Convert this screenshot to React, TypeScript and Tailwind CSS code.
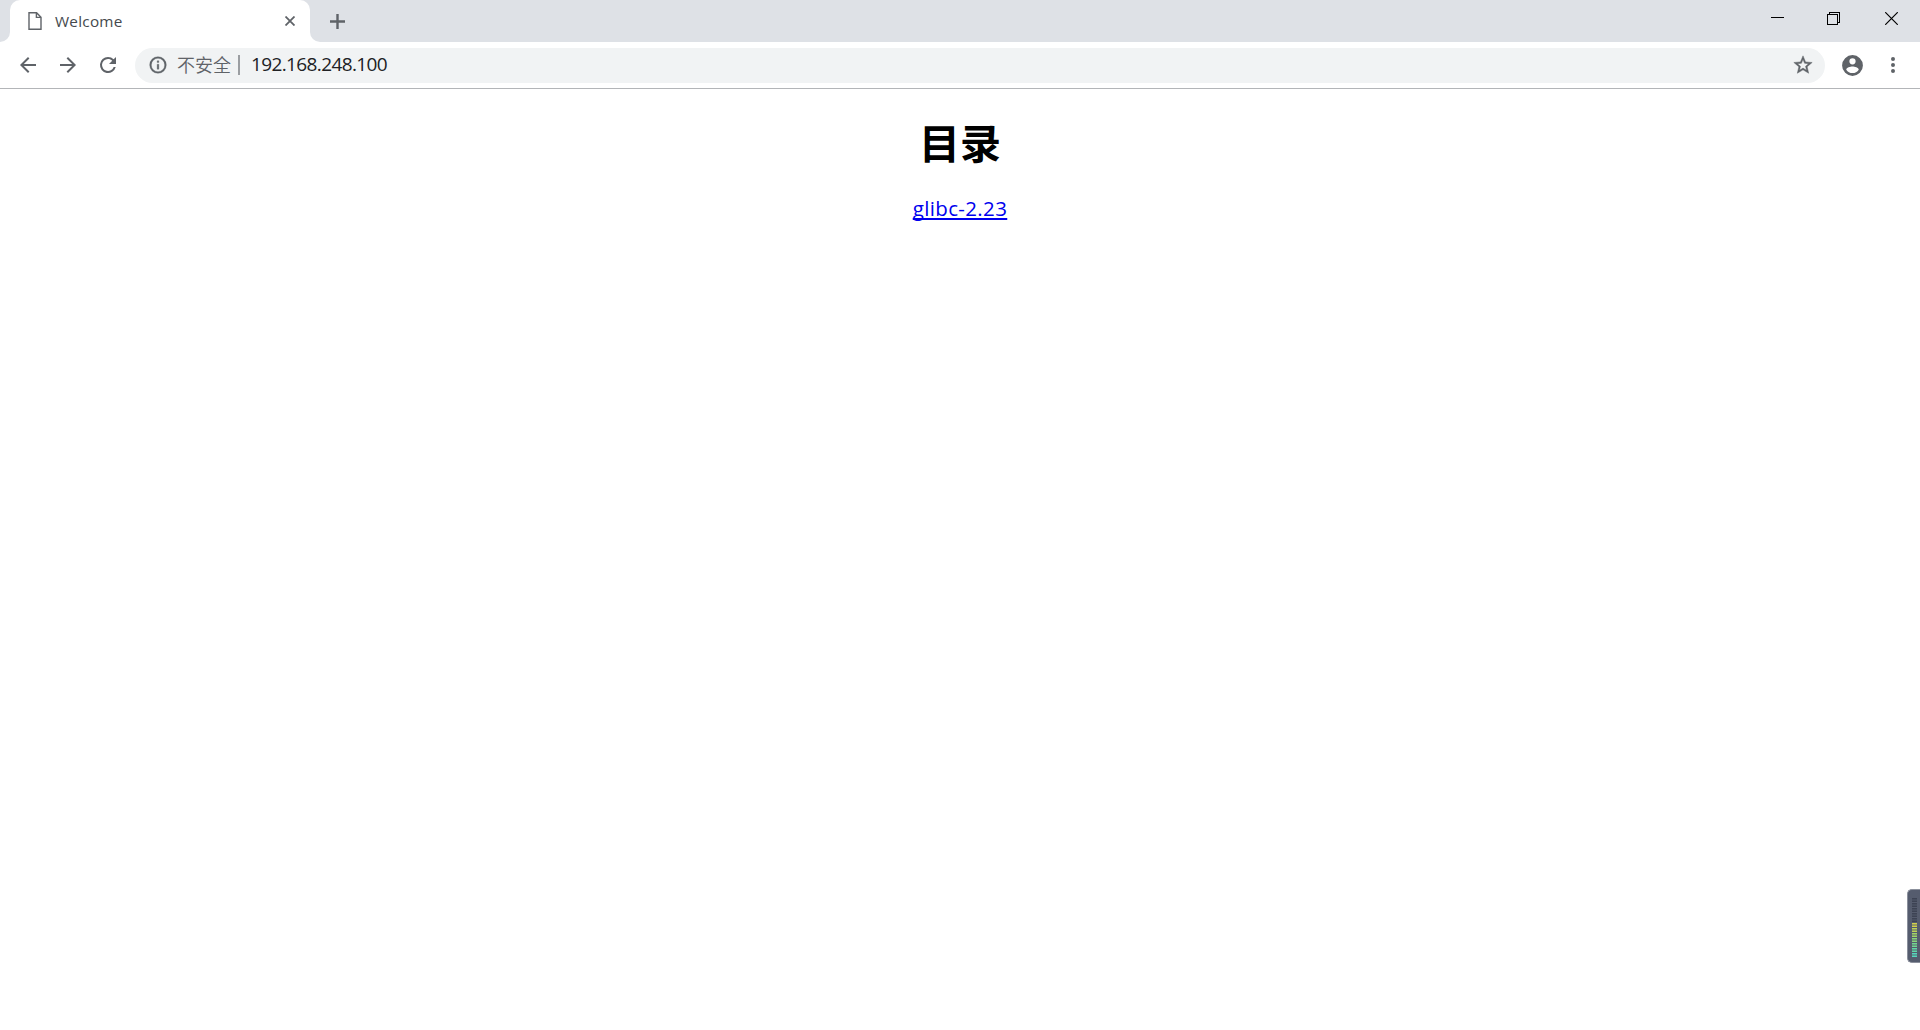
import React from "react";

const meter = [
  "#3d4354", "#3d4354", "#3d4354", "#3d4354", "#3d4354",
  "#d2d24c", "#bdd458", "#a2d766", "#88d77c",
  "#72d890", "#60d8a8", "#56d8bc",
];

function Icon({ d, className }: { d: string; className: string }) {
  return (
    <svg viewBox="0 0 24 24" fill="currentColor" className={`shrink-0 ${className}`}>
      <path d={d} />
    </svg>
  );
}

function TabStrip() {
  return (
    <header className="flex h-[42px] items-start bg-[#dee1e6]">
      <div className="h-[42px] w-[10px] bg-white">
        <div className="h-full rounded-br-[10px] bg-[#dee1e6]" />
      </div>
      <div className="flex h-[42px] w-[300px] items-center rounded-t-[10px] bg-white pl-[18px] text-[#5f6368]">
        <svg viewBox="0 0 14 18" fill="none" stroke="#5f6368" strokeWidth="1.4" className="h-[18px] w-[14px]">
          <path d="M1 .8h7.6L13 5.2v12H1zM8.4 1v4.4h4.4" />
        </svg>
        <span className="ml-[13px] flex-1 text-[15.300px] leading-[20px] tracking-[0.250px] text-[#45494d]">Welcome</span>
        <svg viewBox="0 0 10 10" fill="none" stroke="currentColor" strokeWidth="1.8" className="mr-[15px] h-[10px] w-[10px]">
          <path d="M.5.5l9 9M9.500 .5l-9 9" />
        </svg>
      </div>
      <div className="flex h-[42px] flex-1 bg-white">
        <div className="flex flex-1 rounded-bl-[10px] bg-[#dee1e6]">
          <svg viewBox="0 0 15 15" fill="none" stroke="#5f6368" strokeWidth="2.4" className="ml-5 mt-[13.500px] h-[15px] w-[15px]">
            <path d="M0 7.500h15M7.500 0v15" />
          </svg>
          <div className="ml-auto flex text-black">
            <svg viewBox="0 0 13 13" className="mr-[43px] mt-3 h-[13px] w-[13px]" shapeRendering="crispEdges">
              <path d="M0 5.500h13" stroke="currentColor" />
            </svg>
            <svg viewBox="0 0 13 13" fill="none" stroke="currentColor" className="mr-[45px] mt-3 h-[13px] w-[13px]" shapeRendering="crispEdges">
              <path d="M.5 2.500h10v10H.5zM2.500 2.500V.5h10v10h-2" />
            </svg>
            <svg viewBox="0 0 13 13" fill="none" stroke="currentColor" strokeWidth="1.200" className="mr-[22px] mt-3 h-[13px] w-[13px]">
              <path d="M.2.2l12.600 12.600M12.800.2L.2 12.800" />
            </svg>
          </div>
        </div>
      </div>
    </header>
  );
}

function Toolbar() {
  return (
    <nav className="flex h-[47px] items-center border-b border-[#b3b5b8] bg-white pl-4 text-[#5f6368]">
      <Icon className="size-6" d="M20 11H7.830l5.590-5.590L12 4l-8 8 8 8 1.410-1.410L7.830 13H20z" />
      <Icon className="ml-4 size-6" d="M12 4l-1.410 1.410L16.170 11H4v2h12.170l-5.580 5.590L12 20l8-8z" />
      <Icon className="ml-4 size-6" d="M17.650 6.350A7.960 7.960 0 0 0 12 4a8 8 0 1 0 7.730 10h-2.080A6 6 0 1 1 12 6c1.660 0 3.140.69 4.220 1.780L13 11h7V4z" />
      <div className="ml-[15px] flex h-[35px] w-[1690px] items-center rounded-full bg-[#f1f3f4] pl-[13px] pr-[11px]">
        <Icon className="size-5 stroke-current stroke-[0.4px]" d="M11 7h2v2h-2zm0 4h2v6h-2zm1-9a10 10 0 1 0 0 20 10 10 0 0 0 0-20zm0 18a8 8 0 1 1 0-16 8 8 0 0 1 0 16z" />
        <span className="ml-[9px] w-[54px] whitespace-nowrap pb-[2px] font-['Noto_Sans_CJK_SC',sans-serif] text-[18px] font-[350] leading-[24px]">不安全</span>
        <span className="ml-[7px] h-5 w-[2px] bg-[#9b9ea2]" />
        <span className="ml-[11px] flex-1 pb-[2px] text-[19px] leading-[24px] tracking-[-0.620px] text-[#202124]">192.168.248.100</span>
        <Icon className="size-[22px] stroke-current stroke-[0.5px]" d="M22 9.240l-7.190-.62L12 2 9.190 8.630 2 9.240l5.460 4.730L5.820 21 12 17.270 18.180 21l-1.630-7.030zM12 15.400l-3.760 2.270 1-4.280-3.320-2.880 4.380-.38L12 6.100l1.710 4.040 4.380.38-3.320 2.880 1 4.280z" />
      </div>
      <Icon className="ml-[15px] size-[25px]" d="M12 2a10 10 0 1 0 0 20 10 10 0 0 0 0-20zm0 3a3 3 0 1 1 0 6 3 3 0 0 1 0-6zm0 14.200a7.200 7.200 0 0 1-6-3.220c.03-1.990 4-3.080 6-3.080 1.990 0 5.970 1.090 6 3.080a7.200 7.200 0 0 1-6 3.220z" />
      <Icon className="ml-[16px] size-6" d="M12 8a2 2 0 1 0 0-4 2 2 0 0 0 0 4zm0 2a2 2 0 1 0 0 4 2 2 0 0 0 0-4zm0 6a2 2 0 1 0 0 4 2 2 0 0 0 0-4z" />
    </nav>
  );
}

export default function App() {
  return (
    <div className="relative h-[1030px] w-[1920px] overflow-hidden bg-white font-['Open_Sans',sans-serif]">
      <TabStrip />
      <Toolbar />
      <main className="flex flex-col items-center pt-[24px] text-black">
        <h1 className="font-['Noto_Sans_CJK_SC',sans-serif] text-[41px] font-bold leading-[56px]">目录</h1>
        <a href="#" className="mt-[25px] text-[20.500px] leading-[28px] tracking-[0.350px] text-[#0000ee] underline decoration-[2px] underline-offset-[2px] [text-decoration-skip-ink:none]">
          glibc-2.23
        </a>
      </main>
      <aside className="absolute right-0 top-[889px] flex h-[74px] w-[13px] flex-col items-center gap-px rounded-l-[5px] border border-r-0 border-[#8b909c] bg-[#555c6e] pl-px pt-[8px]">
        {meter.map((color, i) => (
          <div key={i} className="flex h-[4px] w-[5px] flex-col justify-between" style={{ color }}>
            <div className="h-px bg-current" />
            <div className="h-[2px] bg-current opacity-55" />
            <div className="h-px bg-current" />
          </div>
        ))}
      </aside>
    </div>
  );
}
